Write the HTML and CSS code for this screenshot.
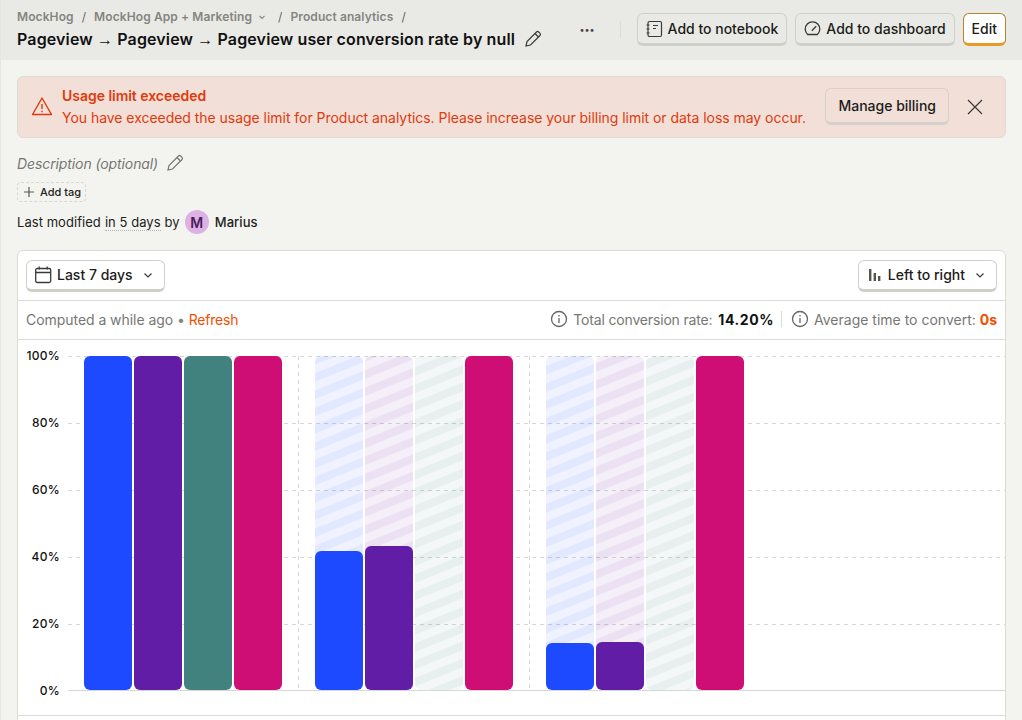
FILE: index.html
```html
<!DOCTYPE html>
<html lang="en">
<head>
    <meta charset="UTF-8" />
    <meta name="viewport" content="width=device-width, initial-scale=1.0" />
    <title>Pageview user conversion rate</title>
    <link rel="stylesheet" href="styles.css">
</head>
<body>

    <header class="topbar">
        <div class="topbar-left">
            <div class="crumbs">
                <span>MockHog</span><span class="sep">/</span>
                <span>MockHog App + Marketing</span>
                <svg class="crumb-caret" width="10" height="10" viewBox="0 0 10 10"><path d="M2.5 4l2.5 2.5L7.5 4" fill="none" stroke="#8a8a85" stroke-width="1.1"/></svg>
                <span class="sep sep-wide">/</span>
                <span>Product analytics</span><span class="sep">/</span>
            </div>
            <div class="title-row">
                <h1>Pageview <span class="arrow">→</span> Pageview <span class="arrow">→</span> Pageview user conversion rate by null</h1>
                <svg width="20" height="20" viewBox="0 0 20 20" fill="none" stroke="#3a3a38" stroke-width="1.2"><path d="M3 17l1-4.5L13.5 3a1.6 1.6 0 0 1 2.2 0l1.3 1.3a1.6 1.6 0 0 1 0 2.2L7.5 16z"/><path d="M12 4.5l3.5 3.5"/></svg>
            </div>
        </div>
        <div class="topbar-right">
            <span class="more">•••</span>
            <span class="divider"></span>
            <button class="btn">
                <svg width="17" height="18" viewBox="0 0 17 18" fill="none" stroke="#3a3a38" stroke-width="1.2"><rect x="2" y="1.5" width="13.5" height="15" rx="1.5"/><path d="M.5 5h3M.5 9h3M.5 13h3M7 5.5h5M7 8.5h3"/></svg>
                Add to notebook
            </button>
            <button class="btn">
                <svg width="17" height="18" viewBox="0 0 17 18" fill="none" stroke="#3a3a38" stroke-width="1.3"><path d="M3.6 14.5h9.8a7.3 7.3 0 1 0-9.8 0z" stroke-linejoin="round"/><path d="M7.8 10.8l4.4-4.6"/></svg>
                Add to dashboard
            </button>
            <button class="btn btn-edit">Edit</button>
        </div>
    </header>

    <main class="content">
        <div class="alert">
            <svg class="alert-icon" width="22" height="22" viewBox="0 0 22 22" fill="none" stroke="#e03a0c" stroke-width="1.4"><path d="M11 3L1.5 19.5h19z" stroke-linejoin="round"/><path d="M11 9v5M11 15.8v1.4"/></svg>
            <div class="alert-text">
                <strong>Usage limit exceeded</strong>
                <p>You have exceeded the usage limit for Product analytics. Please increase your billing limit or data loss may occur.</p>
            </div>
            <button class="btn btn-alert">Manage billing</button>
            <svg class="alert-close" width="16" height="16" viewBox="0 0 16 16" stroke="#3a3a38" stroke-width="1.2"><path d="M1 1l14 14M15 1L1 15"/></svg>
        </div>

        <div class="description">
            <em>Description (optional)</em>
            <svg width="20" height="20" viewBox="0 0 20 20" fill="none" stroke="#777772" stroke-width="1.2"><path d="M3 17l1-4.5L13.5 3a1.6 1.6 0 0 1 2.2 0l1.3 1.3a1.6 1.6 0 0 1 0 2.2L7.5 16z"/><path d="M12 4.5l3.5 3.5"/></svg>
        </div>

        <div class="add-tag">
            <svg width="12" height="12" viewBox="0 0 12 12" stroke="#555" stroke-width="1.2"><path d="M6 1v10M1 6h10"/></svg>
            Add tag
        </div>

        <div class="modified">
            Last modified <span class="dotted">in 5 days</span> by
            <span class="avatar">M</span>
            <span class="author">Marius</span>
        </div>

        <section class="card">
            <div class="card-toolbar">
                <button class="btn btn-white">
                    <svg width="17" height="18" viewBox="0 0 17 18" fill="none" stroke="#3a3a38" stroke-width="1.3"><rect x=".7" y="2.5" width="15" height="14" rx="1.5"/><path d="M.7 6.5h15M4.2 .5v3M12.2 .5v3"/></svg>
                    Last 7 days
                    <svg class="caret" width="12" height="12" viewBox="0 0 12 12"><path d="M2.5 4.5L6 8l3.5-3.5" fill="none" stroke="#3a3a38" stroke-width="1.2"/></svg>
                </button>
                <button class="btn btn-white">
                    <svg width="16" height="16" viewBox="0 0 16 16" fill="#55554f"><rect x="2" y="2" width="2.4" height="12"/><rect x="6.6" y="6" width="2.4" height="8"/><rect x="11" y="9" width="2.4" height="5"/></svg>
                    Left to right
                    <svg class="caret" width="12" height="12" viewBox="0 0 12 12"><path d="M2.5 4.5L6 8l3.5-3.5" fill="none" stroke="#3a3a38" stroke-width="1.2"/></svg>
                </button>
            </div>

            <div class="card-stats">
                <div class="computed">Computed a while ago <span class="dot">•</span> <a>Refresh</a></div>
                <div class="stats">
                    <svg width="18" height="18" viewBox="0 0 18 18" fill="none" stroke="#666660" stroke-width="1.3"><circle cx="9" cy="9" r="7.5"/><path d="M9 8v5M9 5v1.6"/></svg>
                    <span class="stat-label">Total conversion rate: <b class="rate">14.20%</b></span>
                    <span class="stat-sep"></span>
                    <svg width="18" height="18" viewBox="0 0 18 18" fill="none" stroke="#666660" stroke-width="1.3"><circle cx="9" cy="9" r="7.5"/><path d="M9 8v5M9 5v1.6"/></svg>
                    <span>Average time to convert: <b class="time">0s</b></span>
                </div>
            </div>

            <div class="chart">
                <svg width="988" height="375" viewBox="18 340 988 375">
                    <defs>
                        <pattern id="hatch-blue" width="16" height="16" patternUnits="userSpaceOnUse" patternTransform="rotate(-22)">
                            <rect width="16" height="16" fill="#1d4aff" fill-opacity=".066"/><rect width="16" height="8" fill="#1d4aff" fill-opacity=".066"/>
                        </pattern>
                        <pattern id="hatch-purple" width="16" height="16" patternUnits="userSpaceOnUse" patternTransform="rotate(-22)">
                            <rect width="16" height="16" fill="#621da6" fill-opacity=".07"/><rect width="16" height="8" fill="#621da6" fill-opacity=".068"/>
                        </pattern>
                        <pattern id="hatch-green" width="16" height="16" patternUnits="userSpaceOnUse" patternTransform="rotate(-22)">
                            <rect width="16" height="16" fill="#42827e" fill-opacity=".063"/><rect width="16" height="8" fill="#42827e" fill-opacity=".068"/>
                        </pattern>
                    </defs>

                    <g class="grid">
                        <path d="M68 356.5H1005M68 423.5H1005M68 490.5H1005M68 557.5H1005M68 624.5H1005"/>
                        <path d="M298.5 356V690M529.5 356V690"/>
                    </g>

                    <g>
                        <path fill="#1d4aff" d="M84 362a6 6 0 0 1 6-6h36a6 6 0 0 1 6 6v322a6 6 0 0 1-6 6H90a6 6 0 0 1-6-6z"/>
                        <path fill="#621da6" d="M134 362a6 6 0 0 1 6-6h36a6 6 0 0 1 6 6v322a6 6 0 0 1-6 6h-36a6 6 0 0 1-6-6z"/>
                        <path fill="#42827e" d="M184 362a6 6 0 0 1 6-6h36a6 6 0 0 1 6 6v322a6 6 0 0 1-6 6h-36a6 6 0 0 1-6-6z"/>
                        <path fill="#ce0e74" d="M234 362a6 6 0 0 1 6-6h36a6 6 0 0 1 6 6v322a6 6 0 0 1-6 6h-36a6 6 0 0 1-6-6z"/>

                        <path fill="url(#hatch-blue)" d="M315 362a6 6 0 0 1 6-6h36a6 6 0 0 1 6 6v195h-48z"/>
                        <path fill="url(#hatch-purple)" d="M365 362a6 6 0 0 1 6-6h36a6 6 0 0 1 6 6v190h-48z"/>
                        <path fill="url(#hatch-green)" d="M415 362a6 6 0 0 1 6-6h36a6 6 0 0 1 6 6v322a6 6 0 0 1-6 6h-36a6 6 0 0 1-6-6z"/>
                        <path fill="#1d4aff" d="M315 557a6 6 0 0 1 6-6h36a6 6 0 0 1 6 6v127a6 6 0 0 1-6 6h-36a6 6 0 0 1-6-6z"/>
                        <path fill="#621da6" d="M365 552a6 6 0 0 1 6-6h36a6 6 0 0 1 6 6v132a6 6 0 0 1-6 6h-36a6 6 0 0 1-6-6z"/>
                        <path fill="#ce0e74" d="M465 362a6 6 0 0 1 6-6h36a6 6 0 0 1 6 6v322a6 6 0 0 1-6 6h-36a6 6 0 0 1-6-6z"/>

                        <path fill="url(#hatch-blue)" d="M546 362a6 6 0 0 1 6-6h36a6 6 0 0 1 6 6v287h-48z"/>
                        <path fill="url(#hatch-purple)" d="M596 362a6 6 0 0 1 6-6h36a6 6 0 0 1 6 6v286h-48z"/>
                        <path fill="url(#hatch-green)" d="M646 362a6 6 0 0 1 6-6h36a6 6 0 0 1 6 6v322a6 6 0 0 1-6 6h-36a6 6 0 0 1-6-6z"/>
                        <path fill="#1d4aff" d="M546 649a6 6 0 0 1 6-6h36a6 6 0 0 1 6 6v35a6 6 0 0 1-6 6h-36a6 6 0 0 1-6-6z"/>
                        <path fill="#621da6" d="M596 648a6 6 0 0 1 6-6h36a6 6 0 0 1 6 6v36a6 6 0 0 1-6 6h-36a6 6 0 0 1-6-6z"/>
                        <path fill="#ce0e74" d="M696 362a6 6 0 0 1 6-6h36a6 6 0 0 1 6 6v322a6 6 0 0 1-6 6h-36a6 6 0 0 1-6-6z"/>
                    </g>

                    <path class="baseline" d="M68 690.5H1005"/>

                    <g class="ticks">
                        <text x="60" y="360">100%</text>
                        <text x="60" y="427">80%</text>
                        <text x="60" y="494">60%</text>
                        <text x="60" y="561">40%</text>
                        <text x="60" y="628">20%</text>
                        <text x="60" y="695">0%</text>
                    </g>
                </svg>
            </div>
            <div class="card-foot"></div>
        </section>
    </main>

</body>
</html>
```

FILE: styles.css
```css
* {
    box-sizing: border-box;
}

html, body {
    height: 100%;
}

body {
    margin: 0;
    height: 720px;
    overflow: hidden;
    font-family: Inter, 'Noto Sans', sans-serif;
    background: #f3f4ef;
    color: #111;
    border-left: 1px solid #e5e6e0;
}

.topbar {
    display: flex;
    justify-content: space-between;
    align-items: center;
    height: 60px;
    padding: 0 16px 1px;
    background: #e9eae5;
}

.crumbs {
    display: flex;
    align-items: center;
    font-size: 12px;
    font-weight: 600;
    letter-spacing: 0.1px;
    color: #85857f;
    line-height: 16px;
    margin-bottom: 3px;
}

.sep {
    margin: 0 8px;
    font-weight: 400;
    color: #666;
}

.sep:last-child {
    margin-right: 0;
}

.crumb-caret {
    margin-left: 5px;
}

.sep-wide {
    margin-left: 11px;
}

.title-row {
    display: flex;
    align-items: center;
    gap: 8px;
}

h1 {
    margin: 0;
    font-size: 16px;
    line-height: 22px;
    font-weight: 600;
    letter-spacing: 0.13px;
    color: #111;
}

.arrow {
    font-family: 'Liberation Sans', sans-serif;
    font-weight: 400;
}

.topbar-right {
    display: flex;
    align-items: center;
    gap: 8px;
}

.more {
    font-size: 9px;
    color: #444;
    margin-right: 17px;
}

.divider {
    width: 1px;
    height: 17px;
    background: #dcdcd6;
    margin-right: 8px;
}

button.btn {
    display: inline-flex;
    align-items: center;
    gap: 5px;
    height: 33px;
    padding: 0 8px;
    font-family: inherit;
    font-size: 14px;
    font-weight: 450;
    color: #1c1c1a;
    background: #e9eae5;
    border: 1px solid #d0d0ca;
    border-bottom: 3px solid #cfcfca;
    border-radius: 6px;
}

button.btn-edit {
    background: #fff;
    border-color: #b9822c;
    border-bottom-color: #e79b23;
}

.content {
    padding: 16px 16px 0;
}

.alert {
    display: flex;
    align-items: center;
    height: 62px;
    padding: 0 12px 0 13px;
    background: #f1dfd8;
    border: 1px solid #e6d8d2;
    border-radius: 6px;
    color: #e03a0c;
}

.alert-icon {
    margin-bottom: 3px;
}

.alert-text {
    margin: 0 0 2px 9px;
    flex: 1;
    font-size: 14px;
    line-height: 21px;
    letter-spacing: -0.035px;
}

.alert-text strong {
    display: block;
    font-weight: 600;
}

.alert-text p {
    margin: 1px 0 0;
}

button.btn-alert {
    background: #f1dfd8;
    height: 37px;
    margin-bottom: 2px;
    padding: 0 12px;
    border-color: #d8d0cb;
    border-bottom-color: #d6cfcb;
}

.alert-close {
    margin: 0 10px 0 18px;
}

.description {
    display: flex;
    align-items: center;
    gap: 7px;
    height: 20px;
    margin-top: 15px;
    font-size: 14px;
    letter-spacing: -0.1px;
    color: #777772;
}

.add-tag {
    display: inline-flex;
    align-items: center;
    gap: 5px;
    height: 20px;
    margin-top: 9px;
    padding: 0 4px 0 5px;
    font-size: 11px;
    font-weight: 450;
    color: #222;
    border: 1px dashed #d8d8d2;
    border-radius: 4px;
}

.modified {
    display: flex;
    align-items: center;
    gap: 4px;
    margin-top: 8px;
    height: 24px;
    font-size: 13px;
    letter-spacing: 0.05px;
    color: #222;
}

.dotted {
    border-bottom: 1px dotted #b5b5ae;
}

.avatar {
    display: flex;
    align-items: center;
    justify-content: center;
    width: 24px;
    height: 24px;
    margin-left: 1px;
    border-radius: 50%;
    background: #dcb1e3;
    color: #4a1e5e;
    font-size: 14px;
    font-weight: 600;
}

.author {
    margin-left: 2px;
    font-weight: 450;
}

.card {
    margin-top: 16px;
    width: 989px;
    background: #fff;
    border: 1px solid #dcdcd6;
    border-radius: 6px 6px 0 0;
}

.card-toolbar {
    display: flex;
    justify-content: space-between;
    align-items: center;
    height: 50px;
    padding: 0 8px;
    border-bottom: 1px solid #dcdcd6;
}

button.btn-white {
    background: #fff;
    height: 32px;
    padding: 0 10px 0 8px;
}

.caret {
    margin-left: 4px;
}

.card-stats {
    display: flex;
    justify-content: space-between;
    align-items: center;
    height: 39px;
    padding: 0 8px 2px;
    font-size: 14px;
    color: #777772;
    border-bottom: 1px solid #dcdcd6;
}

.computed {
    letter-spacing: -0.05px;
}

.computed a {
    letter-spacing: -0.2px;
    color: #f54e00;
}

.dot {
    color: #85857f;
}

.stats {
    display: flex;
    align-items: center;
    gap: 5px;
}

.stat-label {
    letter-spacing: -0.16px;
}

.rate {
    margin-left: 2px;
    color: #111;
    font-weight: 700;
    letter-spacing: 0.6px;
}

.time {
    color: #f54e00;
    font-weight: 700;
}

.stat-sep {
    width: 1px;
    height: 16px;
    margin: 0 4px 0 2px;
    background: #dcdcd6;
}

.chart {
    height: 375px;
}

.chart svg {
    display: block;
}

.grid path {
    fill: none;
    stroke: #d8d8d2;
    stroke-width: 1;
    stroke-dasharray: 4 4;
}

.baseline {
    fill: none;
    stroke: #d8d8d2;
    stroke-width: 1;
}

.ticks text {
    font-family: Inter, sans-serif;
    font-size: 12px;
    font-weight: 450;
    letter-spacing: 0.3px;
    fill: #111;
    text-anchor: end;
}

.card-foot {
    height: 20px;
    border-top: 1px solid #dcdcd6;
}
```
